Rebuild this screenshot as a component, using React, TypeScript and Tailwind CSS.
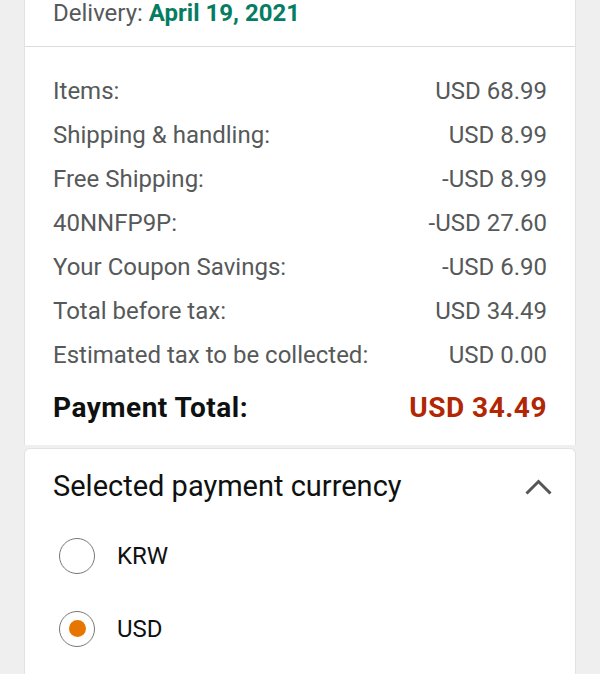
const rows = [
  { label: 'Items:', value: 'USD 68.99' },
  { label: 'Shipping & handling:', value: 'USD 8.99' },
  { label: 'Free Shipping:', value: '-USD 8.99' },
  { label: '40NNFP9P:', value: '-USD 27.60' },
  { label: 'Your Coupon Savings:', value: '-USD 6.90' },
  { label: 'Total before tax:', value: 'USD 34.49' },
  { label: 'Estimated tax to be collected:', value: 'USD 0.00' },
]

const currencies = [
  { code: 'KRW', selected: false },
  { code: 'USD', selected: true },
]

export default function App() {
  return (
    <div className="min-h-[674px] bg-[#efefef] px-6 font-['Roboto',sans-serif] overflow-hidden">
      <div className="bg-white border-x border-[#e2e2e2]">
        <div className="h-[47px] border-b border-[#dddddd] px-7 pt-[1px] text-[24px] leading-[25px] text-[#565959]">
          Delivery:{' '}
          <span className="font-bold text-[#067d62]">April 19, 2021</span>
        </div>

        <div className="px-7 pt-[22px] pb-[15px]">
          {rows.map(row => (
            <div
              key={row.label}
              className="h-[44px] flex items-center justify-between text-[24px] text-[#565959]"
            >
              <span>{row.label}</span>
              <span>{row.value}</span>
            </div>
          ))}

          <div className="mt-[9px] h-[44px] flex items-center justify-between text-[28px] font-bold tracking-[0.5px]">
            <span className="text-[#0f1111]">Payment Total:</span>
            <span className="text-[#b12704]">USD 34.49</span>
          </div>
        </div>
      </div>

      <div className="mt-[3px] bg-white rounded-t-md border-x border-t border-[#e2e2e2] min-h-[240px]">
        <div className="h-[76px] pl-7 pr-[23px] flex items-center justify-between">
          <span className="text-[29px] text-[#0f1111]">
            Selected payment currency
          </span>
          <svg width="27" height="16" viewBox="0 0 27 16" fill="none">
            <polyline
              points="1.5,14.5 13.5,2.5 25.5,14.5"
              stroke="#555555"
              strokeWidth="3"
            />
          </svg>
        </div>

        <div className="pl-[34px] -mt-[6px]">
          {currencies.map(c => (
            <div key={c.code} className="h-[73px] flex items-center gap-[22px]">
              <span className="size-[36px] rounded-full border-[1.5px] border-[#777777] flex items-center justify-center">
                {c.selected && (
                  <span className="size-[17px] rounded-full bg-[#e77600]" />
                )}
              </span>
              <span className="text-[24px] text-[#0f1111]">{c.code}</span>
            </div>
          ))}
        </div>
      </div>
    </div>
  )
}
